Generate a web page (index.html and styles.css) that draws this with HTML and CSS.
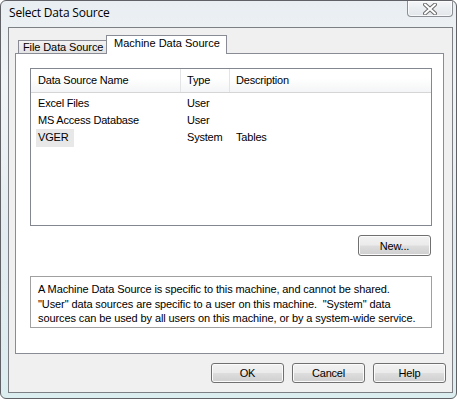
FILE: index.html
```html
<!DOCTYPE html>
<html lang="en">
<head>
<meta charset="UTF-8">
<title>Select Data Source</title>
<link rel="stylesheet" href="styles.css">
</head>
<body>

<div class="window">
    <div class="titlebar">
        <span class="title">Select Data Source</span>
        <button class="close" title="Close">
            <svg width="14" height="12" viewBox="0 0 14 12">
                <path d="M2 1.5 L12 10.5 M12 1.5 L2 10.5" stroke="#6b6b6b" stroke-width="4" stroke-linecap="round"/>
                <path d="M2 1.5 L12 10.5 M12 1.5 L2 10.5" stroke="#ffffff" stroke-width="2" stroke-linecap="round"/>
            </svg>
        </button>
    </div>

    <div class="client">
        <div class="tabs">
            <div class="tab">File Data Source</div>
            <div class="tab active">Machine Data Source</div>
        </div>

        <div class="panel">
            <div class="list">
                <div class="list-head">
                    <div class="col">Data Source Name</div>
                    <div class="col">Type</div>
                    <div class="col last">Description</div>
                </div>
                <div class="list-body">
                    <div class="list-row">
                        <div class="cell name"><span>Excel Files</span></div>
                        <div class="cell">User</div>
                        <div class="cell"></div>
                    </div>
                    <div class="list-row">
                        <div class="cell name"><span>MS Access Database</span></div>
                        <div class="cell">User</div>
                        <div class="cell"></div>
                    </div>
                    <div class="list-row">
                        <div class="cell name"><span class="selected">VGER</span></div>
                        <div class="cell">System</div>
                        <div class="cell">Tables</div>
                    </div>
                </div>
            </div>

            <div class="new-row">
                <button class="btn">New...</button>
            </div>

            <div class="desc">
                A Machine Data Source is specific to this machine, and cannot be shared.<br>
                "User" data sources are specific to a user on this machine.&nbsp; "System" data<br>
                sources can be used by all users on this machine, or by a system-wide service.
            </div>
        </div>

        <div class="actions">
            <button class="btn">OK</button>
            <button class="btn">Cancel</button>
            <button class="btn">Help</button>
        </div>
    </div>
</div>

</body>
</html>
```

FILE: styles.css
```css
* {
    box-sizing: border-box;
    margin: 0;
    padding: 0;
}
body {
    font-family: "Liberation Sans", Arial, sans-serif;
    font-size: 11px;
    letter-spacing: -0.2px;
    color: #000;
    background: #ffffff;
}

/* aero frame */
.window {
    width: 457px;
    height: 399px;
    border: 1px solid #5f6166;
    border-radius: 6px;
    background: linear-gradient(to bottom, #e9eef2 0%, #f1f4f6 20%, #e3ecf1 60%, #dcedf0 100%);
    display: flex;
    flex-direction: column;
    overflow: hidden;
}
.titlebar {
    height: 26px;
    display: flex;
    justify-content: space-between;
    align-items: flex-start;
    padding-left: 8px;
}
.title {
    font-family: "Open Sans", "Noto Sans", sans-serif;
    font-size: 12px;
    letter-spacing: -0.2px;
    line-height: 24px;
    color: #000;
}
.close {
    width: 46px;
    height: 16px;
    margin-right: 3px;
    border: 1px solid #8c8f94;
    border-top: none;
    border-radius: 0 0 4px 4px;
    background: linear-gradient(to bottom, #f4f6f8, #e2e6ea);
    box-shadow: inset 0 0 0 1px rgba(255,255,255,0.7);
    display: flex;
    align-items: center;
    justify-content: center;
}

.client {
    height: 366px;
    margin: 0 3px 0 7px;
    border: 1px solid #7c7f84;
    background: #f0f0f0;
    display: flex;
    flex-direction: column;
}

/* tabs */
.tabs {
    height: 25px;
    display: flex;
    align-items: flex-end;
    padding-left: 9px;
}
.tab {
    height: 13px;
    padding: 0 4px;
    border: 1px solid #898c95;
    border-bottom: none;
    background: linear-gradient(to bottom, #f3f3f3, #e3e3e3);
    line-height: 12px;
    letter-spacing: -0.1px;
    white-space: nowrap;
    overflow: hidden;
}
.tab:first-child {
    width: 89px;
    margin-right: -1px;
}
.tab.active {
    position: relative;
    z-index: 1;
    width: 121px;
    height: 19px;
    margin-bottom: -1px;
    padding: 0 7px;
    background: #ffffff;
    line-height: 15px;
    letter-spacing: 0;
}

.panel {
    width: 429px;
    height: 301px;
    margin-left: 6px;
    border: 1px solid #898c95;
    background: #ffffff;
    padding: 14px 11px 0 14px;
}

/* list view */
.list {
    height: 158px;
    border: 1px solid #828790;
    background: #ffffff;
}
.list-head {
    display: grid;
    grid-template-columns: 150px 49px 1fr;
    height: 24px;
    border-bottom: 1px solid #d5d5d5;
    background: linear-gradient(to bottom, #ffffff 0%, #ffffff 40%, #f4f5f6 100%);
}
.col {
    padding-left: 6px;
    line-height: 23px;
    border-right: 1px solid #e3e4e6;
}
.col:first-child {
    padding-left: 7px;
}
.col.last {
    border-right: none;
}
.list-body {
    padding-top: 2px;
}
.list-row {
    display: grid;
    grid-template-columns: 150px 49px 1fr;
    height: 17px;
    line-height: 17px;
}
.cell {
    padding-left: 6px;
    white-space: nowrap;
}
.cell.name {
    padding-left: 5px;
}
.cell.name span {
    display: inline-block;
    padding: 0 2px;
}
.cell.name span.selected {
    width: 38px;
    height: 18px;
    background: #e8e8e8;
}

/* buttons */
.btn {
    font-family: "Liberation Sans", Arial, sans-serif;
    font-size: 11px;
    letter-spacing: -0.2px;
    color: #000;
    width: 73px;
    height: 21px;
    border: 1px solid #707070;
    border-radius: 3px;
    background: linear-gradient(to bottom, #f2f2f2 0%, #ebebeb 48%, #dddddd 52%, #cfcfcf 100%);
    box-shadow: inset 0 0 0 1px #fbfbfb;
}

.new-row {
    display: flex;
    justify-content: flex-end;
    padding: 9px 1px 0 0;
}

.desc {
    margin-top: 20px;
    height: 52px;
    border: 1px solid #a0a0a0;
    padding: 5px 0 0 7px;
    line-height: 14.5px;
    letter-spacing: -0.1px;
    white-space: nowrap;
}

.actions {
    display: flex;
    justify-content: flex-end;
    gap: 8px;
    padding: 9px 6px 0 0;
}
.actions .btn {
    height: 20px;
}
```
